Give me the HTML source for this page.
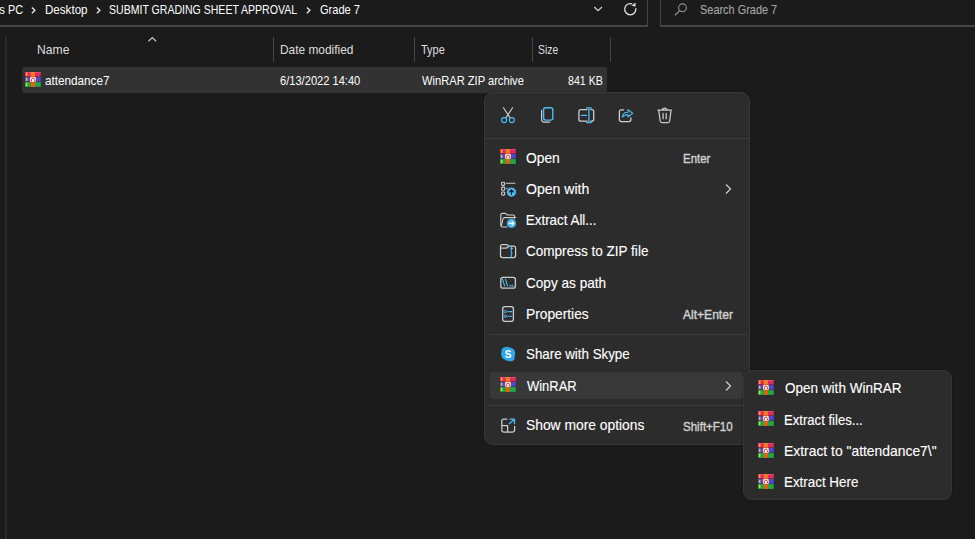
<!DOCTYPE html><html><head><meta charset="utf-8"><style>
html,body{margin:0;padding:0;}
body{width:975px;height:539px;overflow:hidden;background:#1b1b1b;position:relative;font-family:"Liberation Sans",sans-serif;}
.t{position:absolute;white-space:pre;}
.a{position:absolute;display:block;}
.b{position:absolute;box-sizing:border-box;}
</style></head><body>
<div class="b" style="left:-10px;top:-10px;width:658.2px;height:37px;border:1px solid #454545;border-bottom-width:2px;"></div>
<div class="b" style="left:659.8px;top:-10px;width:330px;height:37px;border:1px solid #454545;border-bottom-width:2px;"></div>
<svg class="a" style="left:31.2px;top:6px" width="6" height="9" viewBox="0 0 6 9"><path d="M0.9 1.4 L3.9 4.3 L0.9 7.2" fill="none" stroke="#e8e8e8" stroke-width="1.35"/></svg>
<svg class="a" style="left:96px;top:6px" width="6" height="9" viewBox="0 0 6 9"><path d="M0.9 1.4 L3.9 4.3 L0.9 7.2" fill="none" stroke="#e8e8e8" stroke-width="1.35"/></svg>
<svg class="a" style="left:306px;top:6px" width="6" height="9" viewBox="0 0 6 9"><path d="M0.9 1.4 L3.9 4.3 L0.9 7.2" fill="none" stroke="#e8e8e8" stroke-width="1.35"/></svg>
<svg class="a" style="left:0;top:0" width="975" height="30" viewBox="0 0 975 30">
<path d="M594.3 7 L598.1 10.7 L601.9 7" fill="none" stroke="#d8d8d8" stroke-width="1.1"/>
<path d="M635.8 8.2 A5.6 5.6 0 1 1 632.2 3.9" fill="none" stroke="#dedede" stroke-width="1.25"/>
<path d="M631.4 5.6 L635.6 2.6 L635.5 6.8 Z" fill="#dedede"/>
<circle cx="682.5" cy="7.8" r="3.9" fill="none" stroke="#8f8f8f" stroke-width="1.15"/>
<path d="M679.6 10.7 L674.9 15.3" stroke="#8f8f8f" stroke-width="1.25"/>
</svg><div class="b" style="left:5.3px;top:36.8px;width:2px;height:510px;background:#2c2c2c;"></div>
<div class="b" style="left:273.2px;top:37px;width:1.2px;height:24.5px;background:#464646;"></div>
<div class="b" style="left:413.9px;top:37px;width:1.2px;height:24.5px;background:#464646;"></div>
<div class="b" style="left:531.7px;top:37px;width:1.2px;height:24.5px;background:#464646;"></div>
<div class="b" style="left:609.6px;top:37px;width:1.2px;height:24.5px;background:#464646;"></div>
<svg class="a" style="left:147px;top:36px" width="11" height="7" viewBox="0 0 11 7"><path d="M1.5 5.3 L5.3 1.6 L9.1 5.3" fill="none" stroke="#c4c4c4" stroke-width="1.25"/></svg>
<div class="b" style="left:22px;top:67.2px;width:585px;height:26.2px;background:#323232;border-radius:2px;"></div>
<svg class="a" style="left:25.3px;top:71.5px" width="16" height="16" viewBox="0 0 16 16">
<rect x="0" y="0" width="15.8" height="14.9" fill="#3a1a2a"/>
<rect x="0" y="0" width="15.8" height="4.6" fill="#dc2a62"/>
<rect x="0" y="5.1" width="15.8" height="4.5" fill="#4c4ccc"/>
<rect x="0" y="10.1" width="15.8" height="4.8" fill="#22a842"/>
<rect x="0" y="0" width="15.8" height="1" fill="#ff5a8a" opacity="0.5"/>
<rect x="5.8" y="0" width="4" height="4.6" fill="#f2801e"/>
<rect x="5.8" y="10.1" width="4" height="4.8" fill="#ec5c14"/>
<rect x="0.9" y="0.8" width="1.5" height="3.1" fill="#ffb81c"/>
<rect x="0.9" y="5.8" width="1.5" height="3.1" fill="#f4c020"/>
<rect x="0.9" y="10.8" width="1.5" height="3.3" fill="#c8dc2a"/>
<rect x="5.1" y="4.6" width="5.6" height="5.5" fill="#f2701a"/>
<rect x="5.2" y="5.3" width="5.4" height="4.4" rx="0.6" fill="#ffffff"/>
<path d="M6.4 9.4 V7.4 Q6.4 6.2 7.9 6.2 Q9.4 6.2 9.4 7.4 V9.4" fill="none" stroke="#e0301c" stroke-width="1"/>
</svg><div class="b" style="left:484.1px;top:92px;width:266px;height:352.6px;background:#2c2c2c;border:1.2px solid #393939;border-radius:8.5px;box-shadow:0 0 2px rgba(0,0,0,0.4);"></div>
<div class="b" style="left:486px;top:137.7px;width:263px;height:1px;background:#3e3e3e;"></div>
<div class="b" style="left:488.5px;top:333.6px;width:258px;height:1.1px;background:#3d3d3d;"></div>
<div class="b" style="left:488.5px;top:404.9px;width:258px;height:1.1px;background:#3d3d3d;"></div>
<div class="b" style="left:490.4px;top:372px;width:252.6px;height:27px;background:#383838;border-radius:4px;"></div>
<svg class="a" style="left:724px;top:183.4px" width="9" height="12" viewBox="0 0 9 12"><path d="M2 1.5 L6.5 6 L2 10.5" fill="none" stroke="#d0d0d0" stroke-width="1.2"/></svg>
<svg class="a" style="left:724px;top:379.7px" width="9" height="12" viewBox="0 0 9 12"><path d="M2 1.5 L6.5 6 L2 10.5" fill="none" stroke="#d0d0d0" stroke-width="1.2"/></svg>
<svg class="a" style="left:0;top:0" width="975" height="539" viewBox="0 0 975 539">
<g fill="none" stroke-linecap="round" stroke-linejoin="round">
<!-- scissors -->
<path d="M503.4 107.8 L510 117.6 M512.6 107.8 L506 117.6" stroke="#cdcdcd" stroke-width="1.15"/>
<circle cx="504.1" cy="120.1" r="2.5" stroke="#4cbcf4" stroke-width="1.2"/>
<circle cx="511.8" cy="120.1" r="2.5" stroke="#4cbcf4" stroke-width="1.2"/>
<!-- copy -->
<path d="M541.6 110.3 V119.6 Q541.6 122.1 544.4 122.1 H549.8" stroke="#cdcdcd" stroke-width="1.2"/>
<rect x="543.6" y="107.8" width="9.2" height="12.3" rx="2" stroke="#4cbcf4" stroke-width="1.4"/>
<!-- rename -->
<path d="M587 109.6 H580.8 Q578.9 109.6 578.9 111.5 V119.3 Q578.9 121.2 580.8 121.2 H587 M590.8 109.6 H591.9 Q593.7 109.6 593.7 111.5 V119.3 Q593.7 121.2 591.9 121.2 H590.8" stroke="#cdcdcd" stroke-width="1.3"/>
<path d="M588.9 108 V122.6 M586.5 107.9 H591.3 M586.5 122.7 H591.3 M581.3 115.4 H586.5" stroke="#4cbcf4" stroke-width="1.3"/>
<!-- share -->
<path d="M623.6 109.8 H621.4 Q619.4 109.8 619.4 111.8 V119.6 Q619.4 121.6 621.4 121.6 H628.9 Q630.9 121.6 630.9 119.6 V118" stroke="#cdcdcd" stroke-width="1.3"/>
<path d="M622.4 117 C622.8 113.8 625 112.3 628 112.3 V109.6 L632.6 113.3 L628 117 V114.6 C625.8 114.6 623.8 115.5 622.4 117 Z" stroke="#4cbcf4" stroke-width="1.1"/>
<!-- delete -->
<path d="M657.8 110 H671.4 M661.8 109.8 Q664.6 106.2 667.4 109.8 M658.7 110.2 L660.2 121 Q660.4 122.5 661.9 122.5 H668 Q669.5 122.5 669.7 121 L671 110.2 M663.1 113.4 V118.8 M666.2 113.4 V118.8" stroke="#cdcdcd" stroke-width="1.25"/>

<!-- open with -->
<rect x="501.6" y="182.3" width="3.1" height="3.1" rx="0.8" stroke="#cdcdcd" stroke-width="1.1"/>
<rect x="501.6" y="187.1" width="3.1" height="3.1" rx="0.8" stroke="#cdcdcd" stroke-width="1.1"/>
<rect x="501.6" y="192" width="3.1" height="3.1" rx="0.8" stroke="#cdcdcd" stroke-width="1.1"/>
<path d="M506.4 183.3 H514.8 M506.4 188.3 H507.2" stroke="#cdcdcd" stroke-width="1.1"/>
<circle cx="511.5" cy="192.1" r="4.9" fill="#4cbcf4" stroke="#2c2c2c" stroke-width="0.6"/>
<path d="M511.5 194.4 V190.2 M509.6 191.8 L511.5 189.9 L513.4 191.8" stroke="#101010" stroke-width="1.2"/>

<!-- extract all -->
<path d="M507 227 H502.6 Q500.8 227 500.8 225.2 V215 Q500.8 213.4 502.4 213.4 H505.4 L507.2 215 H513 Q514.6 215 514.6 216.6 V218" stroke="#cdcdcd" stroke-width="1.15"/>
<path d="M501.4 225.5 L503 218.8 Q503.3 217.6 504.5 217.6 H515.6" stroke="#cdcdcd" stroke-width="1.1"/>
<circle cx="511.5" cy="223.4" r="4.9" fill="#4cbcf4" stroke="#2c2c2c" stroke-width="0.6"/>
<path d="M509.2 223.4 H513.8 M512 221.6 L513.8 223.4 L512 225.2" stroke="#ffffff" stroke-width="1.1"/>

<!-- compress -->
<path d="M502.5 244.5 H506 Q507.3 244.5 508 245.5 L508.6 246.2 H513.6 Q515.6 246.2 515.6 248.2 V255.6 Q515.6 257.6 513.6 257.6 H502.5 Q500.5 257.6 500.5 255.6 V246.5 Q500.5 244.5 502.5 244.5 Z M500.8 248.1 H505.5 Q507 248.1 508 247 " stroke="#cdcdcd" stroke-width="1.25"/>
<path d="M511.5 246.2 V249.6 L510.9 251.4 L511.9 253 L511.1 254.8 L511.6 257.8" stroke="#4cbcf4" stroke-width="1.1"/>
<circle cx="511.5" cy="248.4" r="0.9" stroke="#4cbcf4" stroke-width="0.9"/>

<!-- copy as path -->
<rect x="500.8" y="277.3" width="14.6" height="10.9" rx="2.2" stroke="#cdcdcd" stroke-width="1.3"/>
<path d="M502.6 279.3 L504.6 285.9 M505.5 279.3 L507.5 285.9" stroke="#4cbcf4" stroke-width="1.1"/>
<circle cx="510.3" cy="285.8" r="0.6" fill="#4cbcf4" stroke="#4cbcf4" stroke-width="0.5"/>
<circle cx="512.4" cy="285.8" r="0.6" fill="#4cbcf4" stroke="#4cbcf4" stroke-width="0.5"/>

<!-- properties -->
<rect x="502.7" y="306.7" width="10.7" height="14.6" rx="2.2" stroke="#cdcdcd" stroke-width="1.3"/>
<circle cx="505.4" cy="311.6" r="1.2" stroke="#4cbcf4" stroke-width="1"/>
<circle cx="505.4" cy="316.3" r="1.2" stroke="#4cbcf4" stroke-width="1"/>
<path d="M508 311.6 H511.8 M508 316.3 H511.8" stroke="#4cbcf4" stroke-width="1.1"/>

<!-- show more options -->
<path d="M506.8 419 H503.7 Q501.8 419 501.8 420.9 V430.1 Q501.8 432 503.7 432 H512.7 Q514.6 432 514.6 430.1 V426.4 M501.8 425.6 H507.6 V432" stroke="#cdcdcd" stroke-width="1.25"/>
<path d="M509.3 423.8 L514.4 419.2 M509.8 419.2 H514.5 V423.8" stroke="#4cbcf4" stroke-width="1.25"/>
</g>
<!-- skype -->
<path d="M504.6 347.2 Q506.2 346.6 508 346.9 Q510 347.2 511.5 348 Q514.8 349.2 515.1 352.6 Q515.4 354.6 514.6 356.6 Q515.2 359.6 512.6 360.9 Q510.6 361.6 508.4 361 Q506.2 360.8 504.4 359.6 Q501.2 358 501.1 354.8 Q501 353 501.6 351.4 Q501 348.4 504.6 347.2 Z" fill="#2da7e6"/>
<text x="508.1" y="358.4" font-family="Liberation Sans" font-weight="bold" font-size="10" fill="#ffffff" text-anchor="middle">S</text>
</svg><svg class="a" style="left:500px;top:149.4px" width="16" height="16" viewBox="0 0 16 16">
<rect x="0" y="0" width="15.8" height="14.9" fill="#3a1a2a"/>
<rect x="0" y="0" width="15.8" height="4.6" fill="#dc2a62"/>
<rect x="0" y="5.1" width="15.8" height="4.5" fill="#4c4ccc"/>
<rect x="0" y="10.1" width="15.8" height="4.8" fill="#22a842"/>
<rect x="0" y="0" width="15.8" height="1" fill="#ff5a8a" opacity="0.5"/>
<rect x="5.8" y="0" width="4" height="4.6" fill="#f2801e"/>
<rect x="5.8" y="10.1" width="4" height="4.8" fill="#ec5c14"/>
<rect x="0.9" y="0.8" width="1.5" height="3.1" fill="#ffb81c"/>
<rect x="0.9" y="5.8" width="1.5" height="3.1" fill="#f4c020"/>
<rect x="0.9" y="10.8" width="1.5" height="3.3" fill="#c8dc2a"/>
<rect x="5.1" y="4.6" width="5.6" height="5.5" fill="#f2701a"/>
<rect x="5.2" y="5.3" width="5.4" height="4.4" rx="0.6" fill="#ffffff"/>
<path d="M6.4 9.4 V7.4 Q6.4 6.2 7.9 6.2 Q9.4 6.2 9.4 7.4 V9.4" fill="none" stroke="#e0301c" stroke-width="1"/>
</svg><svg class="a" style="left:500px;top:377.2px" width="16" height="16" viewBox="0 0 16 16">
<rect x="0" y="0" width="15.8" height="14.9" fill="#3a1a2a"/>
<rect x="0" y="0" width="15.8" height="4.6" fill="#dc2a62"/>
<rect x="0" y="5.1" width="15.8" height="4.5" fill="#4c4ccc"/>
<rect x="0" y="10.1" width="15.8" height="4.8" fill="#22a842"/>
<rect x="0" y="0" width="15.8" height="1" fill="#ff5a8a" opacity="0.5"/>
<rect x="5.8" y="0" width="4" height="4.6" fill="#f2801e"/>
<rect x="5.8" y="10.1" width="4" height="4.8" fill="#ec5c14"/>
<rect x="0.9" y="0.8" width="1.5" height="3.1" fill="#ffb81c"/>
<rect x="0.9" y="5.8" width="1.5" height="3.1" fill="#f4c020"/>
<rect x="0.9" y="10.8" width="1.5" height="3.3" fill="#c8dc2a"/>
<rect x="5.1" y="4.6" width="5.6" height="5.5" fill="#f2701a"/>
<rect x="5.2" y="5.3" width="5.4" height="4.4" rx="0.6" fill="#ffffff"/>
<path d="M6.4 9.4 V7.4 Q6.4 6.2 7.9 6.2 Q9.4 6.2 9.4 7.4 V9.4" fill="none" stroke="#e0301c" stroke-width="1"/>
</svg><div class="b" style="left:742.6px;top:370.4px;width:209.4px;height:129.4px;background:#2c2c2c;border:1px solid #363636;border-radius:8px;box-shadow:0 0 2px rgba(0,0,0,0.45);"></div>
<svg class="a" style="left:757.8px;top:380.09999999999997px" width="16" height="16" viewBox="0 0 16 16">
<rect x="0" y="0" width="15.8" height="14.9" fill="#3a1a2a"/>
<rect x="0" y="0" width="15.8" height="4.6" fill="#dc2a62"/>
<rect x="0" y="5.1" width="15.8" height="4.5" fill="#4c4ccc"/>
<rect x="0" y="10.1" width="15.8" height="4.8" fill="#22a842"/>
<rect x="0" y="0" width="15.8" height="1" fill="#ff5a8a" opacity="0.5"/>
<rect x="5.8" y="0" width="4" height="4.6" fill="#f2801e"/>
<rect x="5.8" y="10.1" width="4" height="4.8" fill="#ec5c14"/>
<rect x="0.9" y="0.8" width="1.5" height="3.1" fill="#ffb81c"/>
<rect x="0.9" y="5.8" width="1.5" height="3.1" fill="#f4c020"/>
<rect x="0.9" y="10.8" width="1.5" height="3.3" fill="#c8dc2a"/>
<rect x="5.1" y="4.6" width="5.6" height="5.5" fill="#f2701a"/>
<rect x="5.2" y="5.3" width="5.4" height="4.4" rx="0.6" fill="#ffffff"/>
<path d="M6.4 9.4 V7.4 Q6.4 6.2 7.9 6.2 Q9.4 6.2 9.4 7.4 V9.4" fill="none" stroke="#e0301c" stroke-width="1"/>
</svg><svg class="a" style="left:757.8px;top:411.3px" width="16" height="16" viewBox="0 0 16 16">
<rect x="0" y="0" width="15.8" height="14.9" fill="#3a1a2a"/>
<rect x="0" y="0" width="15.8" height="4.6" fill="#dc2a62"/>
<rect x="0" y="5.1" width="15.8" height="4.5" fill="#4c4ccc"/>
<rect x="0" y="10.1" width="15.8" height="4.8" fill="#22a842"/>
<rect x="0" y="0" width="15.8" height="1" fill="#ff5a8a" opacity="0.5"/>
<rect x="5.8" y="0" width="4" height="4.6" fill="#f2801e"/>
<rect x="5.8" y="10.1" width="4" height="4.8" fill="#ec5c14"/>
<rect x="0.9" y="0.8" width="1.5" height="3.1" fill="#ffb81c"/>
<rect x="0.9" y="5.8" width="1.5" height="3.1" fill="#f4c020"/>
<rect x="0.9" y="10.8" width="1.5" height="3.3" fill="#c8dc2a"/>
<rect x="5.1" y="4.6" width="5.6" height="5.5" fill="#f2701a"/>
<rect x="5.2" y="5.3" width="5.4" height="4.4" rx="0.6" fill="#ffffff"/>
<path d="M6.4 9.4 V7.4 Q6.4 6.2 7.9 6.2 Q9.4 6.2 9.4 7.4 V9.4" fill="none" stroke="#e0301c" stroke-width="1"/>
</svg><svg class="a" style="left:757.8px;top:442.5px" width="16" height="16" viewBox="0 0 16 16">
<rect x="0" y="0" width="15.8" height="14.9" fill="#3a1a2a"/>
<rect x="0" y="0" width="15.8" height="4.6" fill="#dc2a62"/>
<rect x="0" y="5.1" width="15.8" height="4.5" fill="#4c4ccc"/>
<rect x="0" y="10.1" width="15.8" height="4.8" fill="#22a842"/>
<rect x="0" y="0" width="15.8" height="1" fill="#ff5a8a" opacity="0.5"/>
<rect x="5.8" y="0" width="4" height="4.6" fill="#f2801e"/>
<rect x="5.8" y="10.1" width="4" height="4.8" fill="#ec5c14"/>
<rect x="0.9" y="0.8" width="1.5" height="3.1" fill="#ffb81c"/>
<rect x="0.9" y="5.8" width="1.5" height="3.1" fill="#f4c020"/>
<rect x="0.9" y="10.8" width="1.5" height="3.3" fill="#c8dc2a"/>
<rect x="5.1" y="4.6" width="5.6" height="5.5" fill="#f2701a"/>
<rect x="5.2" y="5.3" width="5.4" height="4.4" rx="0.6" fill="#ffffff"/>
<path d="M6.4 9.4 V7.4 Q6.4 6.2 7.9 6.2 Q9.4 6.2 9.4 7.4 V9.4" fill="none" stroke="#e0301c" stroke-width="1"/>
</svg><svg class="a" style="left:757.8px;top:473.59999999999997px" width="16" height="16" viewBox="0 0 16 16">
<rect x="0" y="0" width="15.8" height="14.9" fill="#3a1a2a"/>
<rect x="0" y="0" width="15.8" height="4.6" fill="#dc2a62"/>
<rect x="0" y="5.1" width="15.8" height="4.5" fill="#4c4ccc"/>
<rect x="0" y="10.1" width="15.8" height="4.8" fill="#22a842"/>
<rect x="0" y="0" width="15.8" height="1" fill="#ff5a8a" opacity="0.5"/>
<rect x="5.8" y="0" width="4" height="4.6" fill="#f2801e"/>
<rect x="5.8" y="10.1" width="4" height="4.8" fill="#ec5c14"/>
<rect x="0.9" y="0.8" width="1.5" height="3.1" fill="#ffb81c"/>
<rect x="0.9" y="5.8" width="1.5" height="3.1" fill="#f4c020"/>
<rect x="0.9" y="10.8" width="1.5" height="3.3" fill="#c8dc2a"/>
<rect x="5.1" y="4.6" width="5.6" height="5.5" fill="#f2701a"/>
<rect x="5.2" y="5.3" width="5.4" height="4.4" rx="0.6" fill="#ffffff"/>
<path d="M6.4 9.4 V7.4 Q6.4 6.2 7.9 6.2 Q9.4 6.2 9.4 7.4 V9.4" fill="none" stroke="#e0301c" stroke-width="1"/>
</svg><div class="t" style="left:-0.65px;top:4.00px;font-size:11.2px;line-height:normal;color:#ffffff;transform:scale(1.0,1.12);transform-origin:0 10px;">s</div>
<div class="t" style="left:7.54px;top:4.00px;font-size:11.2px;line-height:normal;color:#ffffff;transform:scale(0.9643,1.12);transform-origin:0 10px;">PC</div>
<div class="t" style="left:44.76px;top:4.00px;font-size:11.2px;line-height:normal;color:#ffffff;transform:scale(1.0365,1.12);transform-origin:0 10px;">Desktop</div>
<div class="t" style="left:109.23px;top:4.00px;font-size:11.2px;line-height:normal;color:#ffffff;transform:scale(0.9424,1.12);transform-origin:0 10px;">SUBMIT GRADING SHEET APPROVAL</div>
<div class="t" style="left:319.51px;top:4.00px;font-size:11.2px;line-height:normal;color:#ffffff;transform:scale(0.9873,1.12);transform-origin:0 10px;">Grade 7</div>
<div class="t" style="left:699.9px;top:4.00px;font-size:11.0px;line-height:normal;color:#a3a3a3;transform:scale(0.9941,1.12);transform-origin:0 10px;-webkit-text-stroke:0.12px #a3a3a3;">Search Grade 7</div>
<div class="t" style="left:36.63px;top:44.00px;font-size:11.3px;line-height:normal;color:#dedede;transform:scale(1.0748,1.12);transform-origin:0 10px;">Name</div>
<div class="t" style="left:279.55px;top:44.00px;font-size:11.3px;line-height:normal;color:#dedede;transform:scale(1.0529,1.12);transform-origin:0 10px;">Date modified</div>
<div class="t" style="left:421.26px;top:44.00px;font-size:11.3px;line-height:normal;color:#dedede;transform:scale(0.9726,1.12);transform-origin:0 10px;">Type</div>
<div class="t" style="left:538.04px;top:44.00px;font-size:11.3px;line-height:normal;color:#dedede;transform:scale(0.919,1.12);transform-origin:0 10px;">Size</div>
<div class="t" style="left:44.58px;top:75.00px;font-size:11.3px;line-height:normal;color:#ffffff;transform:scale(1.0367,1.12);transform-origin:0 10px;">attendance7</div>
<div class="t" style="left:280.11px;top:75.00px;font-size:11.3px;line-height:normal;color:#ffffff;transform:scale(0.9833,1.12);transform-origin:0 10px;">6/13/2022 14:40</div>
<div class="t" style="left:421.5px;top:75.00px;font-size:11.3px;line-height:normal;color:#ffffff;transform:scale(0.9854,1.12);transform-origin:0 10px;">WinRAR ZIP archive</div>
<div class="t" style="left:568.13px;top:75.00px;font-size:11.3px;line-height:normal;color:#ffffff;transform:scale(0.9417,1.12);transform-origin:0 10px;">841 KB</div>
<div class="t" style="left:526.28px;top:151.00px;font-size:13.4px;line-height:normal;color:#ffffff;transform:scale(1.0317,1.1);transform-origin:0 12px;-webkit-text-stroke:0.12px #ffffff;">Open</div>
<div class="t" style="left:526.28px;top:182.00px;font-size:13.4px;line-height:normal;color:#ffffff;transform:scale(1.0492,1.1);transform-origin:0 12px;-webkit-text-stroke:0.12px #ffffff;">Open with</div>
<div class="t" style="left:525.8px;top:213.00px;font-size:13.4px;line-height:normal;color:#ffffff;transform:scale(1.0,1.1);transform-origin:0 12px;-webkit-text-stroke:0.12px #ffffff;">Extract All...</div>
<div class="t" style="left:526.04px;top:244.00px;font-size:13.4px;line-height:normal;color:#ffffff;transform:scale(1.0113,1.1);transform-origin:0 12px;-webkit-text-stroke:0.12px #ffffff;">Compress to ZIP file</div>
<div class="t" style="left:526.04px;top:276.00px;font-size:13.4px;line-height:normal;color:#ffffff;transform:scale(1.0149,1.1);transform-origin:0 12px;-webkit-text-stroke:0.12px #ffffff;">Copy as path</div>
<div class="t" style="left:525.77px;top:307.00px;font-size:13.4px;line-height:normal;color:#ffffff;transform:scale(1.0269,1.1);transform-origin:0 12px;-webkit-text-stroke:0.12px #ffffff;">Properties</div>
<div class="t" style="left:526.3px;top:347.00px;font-size:13.4px;line-height:normal;color:#ffffff;transform:scale(0.9947,1.1);transform-origin:0 12px;-webkit-text-stroke:0.12px #ffffff;">Share with Skype</div>
<div class="t" style="left:526.8px;top:379.00px;font-size:13.4px;line-height:normal;color:#ffffff;transform:scale(0.9675,1.1);transform-origin:0 12px;-webkit-text-stroke:0.12px #ffffff;">WinRAR</div>
<div class="t" style="left:526.28px;top:418.00px;font-size:13.4px;line-height:normal;color:#ffffff;transform:scale(1.033,1.1);transform-origin:0 12px;-webkit-text-stroke:0.12px #ffffff;">Show more options</div>
<div class="t" style="left:682.9px;top:153.00px;font-size:11.5px;line-height:normal;color:#d2d2d2;transform:scale(0.9962,1.1);transform-origin:0 10px;-webkit-text-stroke:0.35px #d2d2d2;">Enter</div>
<div class="t" style="left:683.4px;top:309.00px;font-size:11.5px;line-height:normal;color:#d2d2d2;transform:scale(1.0484,1.1);transform-origin:0 10px;-webkit-text-stroke:0.35px #d2d2d2;">Alt+Enter</div>
<div class="t" style="left:682.9px;top:421.00px;font-size:11.5px;line-height:normal;color:#d2d2d2;transform:scale(1.0031,1.1);transform-origin:0 10px;-webkit-text-stroke:0.35px #d2d2d2;">Shift+F10</div>
<div class="t" style="left:784.79px;top:381.00px;font-size:13.4px;line-height:normal;color:#ffffff;transform:scale(1.0101,1.1);transform-origin:0 12px;-webkit-text-stroke:0.12px #ffffff;">Open with WinRAR</div>
<div class="t" style="left:784.32px;top:413.00px;font-size:13.4px;line-height:normal;color:#ffffff;transform:scale(0.9789,1.1);transform-origin:0 12px;-webkit-text-stroke:0.12px #ffffff;">Extract files...</div>
<div class="t" style="left:784.26px;top:444.00px;font-size:13.4px;line-height:normal;color:#ffffff;transform:scale(1.0367,1.1);transform-origin:0 12px;-webkit-text-stroke:0.12px #ffffff;">Extract to "attendance7\"</div>
<div class="t" style="left:784.3px;top:475.00px;font-size:13.4px;line-height:normal;color:#ffffff;transform:scale(0.9993,1.1);transform-origin:0 12px;-webkit-text-stroke:0.12px #ffffff;">Extract Here</div>
</body></html>
